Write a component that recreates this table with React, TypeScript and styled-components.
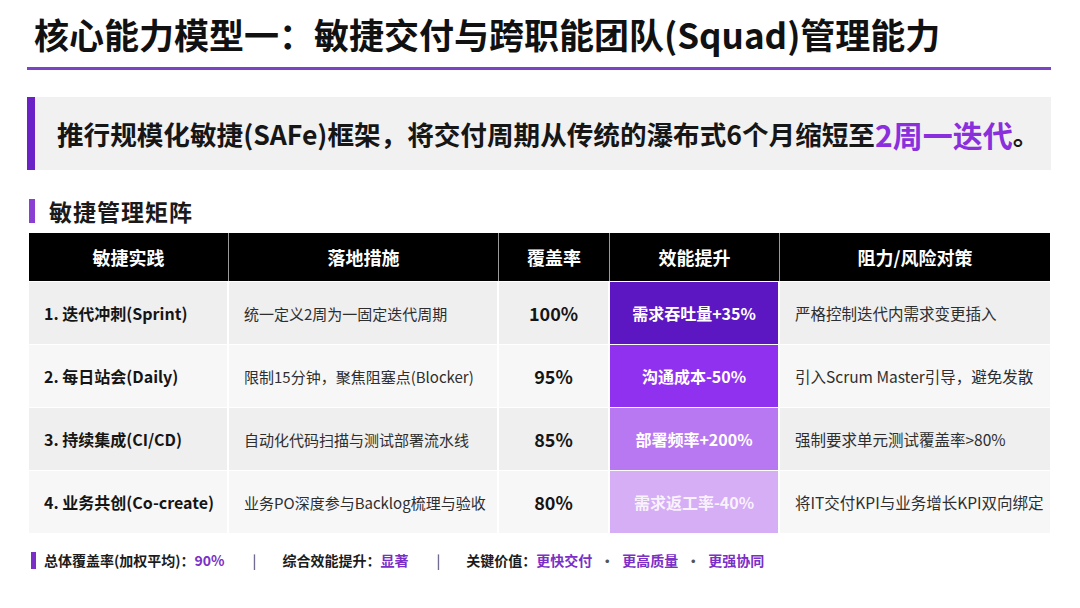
import styled, { createGlobalStyle } from "styled-components";

const GlobalStyle = createGlobalStyle`
  html, body {
    margin: 0;
    padding: 0;
    background: #ffffff;
  }
  body {
    font-family: "Noto Sans CJK SC", "Noto Sans", "Liberation Sans", sans-serif;
    color: #111111;
  }
`;

interface Practice {
  name: string;
  measure: string;
  coverage: string;
  gain: string;
  risk: string;
}

const practices: Practice[] = [
  { name: "1. 迭代冲刺(Sprint)", measure: "统一定义2周为一固定迭代周期", coverage: "100%", gain: "需求吞吐量+35%", risk: "严格控制迭代内需求变更插入" },
  { name: "2. 每日站会(Daily)", measure: "限制15分钟，聚焦阻塞点(Blocker)", coverage: "95%", gain: "沟通成本-50%", risk: "引入Scrum Master引导，避免发散" },
  { name: "3. 持续集成(CI/CD)", measure: "自动化代码扫描与测试部署流水线", coverage: "85%", gain: "部署频率+200%", risk: "强制要求单元测试覆盖率>80%" },
  { name: "4. 业务共创(Co-create)", measure: "业务PO深度参与Backlog梳理与验收", coverage: "80%", gain: "需求返工率-40%", risk: "将IT交付KPI与业务增长KPI双向绑定" },
];

const gainColors = ["#5c16c2", "#9131f0", "#b878f1", "#d6aef5"];
const columns = "200px 270px 111px 170px 270px";

const Page = styled.div`
  width: 1080px;
  height: 608px;
  box-sizing: border-box;
  padding: 12px 29px 0 27px;
  display: flex;
  flex-direction: column;
  overflow: hidden;
`;

const Title = styled.h1`
  margin: 0;
  padding: 0 0 12px 7px;
  font-size: 35px;
  line-height: 43px;
  font-weight: 700;
  color: #111111;
  border-bottom: 3px solid #7a44c8;
`;

const Callout = styled.div`
  margin-top: 27px;
  height: 73px;
  display: flex;
  align-items: center;
  background: #f1f1f1;
  border-left: 8px solid #6a22c6;
  padding-left: 22px;
  font-size: 26.6px;
  font-weight: 700;
  color: #161616;
  white-space: nowrap;
`;

const Highlight = styled.span`
  font-size: 30px;
  color: #8a2fdc;
`;

const SectionHead = styled.h2`
  margin: 27px 0 0 2px;
  display: flex;
  align-items: center;
  gap: 14px;
  font-size: 23px;
  line-height: 28px;
  font-weight: 700;
  letter-spacing: 1px;
  color: #1a1a1a;

  &::before {
    content: "";
    width: 6px;
    height: 24px;
    background: #8a3fd2;
  }
`;

const Table = styled.div`
  margin: 8px 0 0 2px;
  width: 1021px;
  display: grid;
  grid-template-columns: ${columns};
`;

const HeadCell = styled.div<{ $last?: boolean }>`
  height: 48px;
  background: #000000;
  color: #ffffff;
  font-size: 18px;
  font-weight: 700;
  display: flex;
  align-items: center;
  justify-content: center;
  border-right: ${({ $last }) => ($last ? "none" : "1px solid #9a9a9a")};
`;

const Cell = styled.div<{ $odd: boolean; $center?: boolean; $last?: boolean }>`
  height: 63px;
  box-sizing: border-box;
  display: flex;
  align-items: center;
  justify-content: ${({ $center }) => ($center ? "center" : "flex-start")};
  padding: 0 ${({ $center }) => ($center ? "0" : "15px")};
  background: ${({ $odd }) => ($odd ? "#efefef" : "#f7f7f7")};
  border-right: ${({ $last }) => ($last ? "none" : "2px solid #ffffff")};
  border-top: 1px solid #ffffff;
  white-space: nowrap;
`;

const NameText = styled.span`
  font-size: 16px;
  font-weight: 700;
  color: #151515;
`;

const BodyText = styled.span<{ $size: number }>`
  font-size: ${({ $size }) => $size}px;
  font-weight: 400;
  color: #2e2e2e;
`;

const Coverage = styled.span`
  font-size: 18px;
  font-weight: 700;
  color: #151515;
`;

const GainCell = styled.div<{ $bg: string; $faded: boolean }>`
  height: 63px;
  box-sizing: border-box;
  display: flex;
  align-items: center;
  justify-content: center;
  background: ${({ $bg }) => $bg};
  border-right: 2px solid #ffffff;
  border-top: 1px solid #ffffff;
  font-size: 16px;
  font-weight: 700;
  color: ${({ $faded }) => ($faded ? "rgba(255,255,255,0.85)" : "#ffffff")};
  white-space: nowrap;
`;

const Footer = styled.div`
  margin: 17px 0 0 4px;
  display: flex;
  align-items: center;
  font-size: 14px;
  font-weight: 700;
  color: #1c1c1c;
  white-space: nowrap;

  &::before {
    content: "";
    width: 5px;
    height: 17px;
    margin-right: 8px;
    background: #7b2fc6;
  }
`;

const Accent = styled.span`
  color: #7b2fc6;
`;

const Divider = styled.span`
  margin: 0 26px 0 28px;
  font-weight: 400;
  color: #333333;
`;

const Dot = styled.span`
  margin: 0 8px;
  color: #555555;
`;

export default function App() {
  return (
    <>
      <GlobalStyle />
      <Page>
        <Title>核心能力模型一：敏捷交付与跨职能团队(Squad)管理能力</Title>
        <Callout>
          推行规模化敏捷(SAFe)框架，将交付周期从传统的瀑布式6个月缩短至
          <Highlight>2周一迭代</Highlight>。
        </Callout>
        <SectionHead>敏捷管理矩阵</SectionHead>
        <Table>
          <HeadCell>敏捷实践</HeadCell>
          <HeadCell>落地措施</HeadCell>
          <HeadCell>覆盖率</HeadCell>
          <HeadCell>效能提升</HeadCell>
          <HeadCell $last>阻力/风险对策</HeadCell>
          {practices.map((p, i) => {
            const odd = i % 2 === 0;
            return [
              <Cell key={`n${i}`} $odd={odd}>
                <NameText>{p.name}</NameText>
              </Cell>,
              <Cell key={`m${i}`} $odd={odd}>
                <BodyText $size={15}>{p.measure}</BodyText>
              </Cell>,
              <Cell key={`c${i}`} $odd={odd} $center>
                <Coverage>{p.coverage}</Coverage>
              </Cell>,
              <GainCell key={`g${i}`} $bg={gainColors[i]} $faded={i === 3}>
                {p.gain}
              </GainCell>,
              <Cell key={`r${i}`} $odd={odd} $last>
                <BodyText $size={15.5}>{p.risk}</BodyText>
              </Cell>,
            ];
          })}
        </Table>
        <Footer>
          总体覆盖率(加权平均)：<Accent>90%</Accent>
          <Divider>|</Divider>
          综合效能提升：<Accent>显著</Accent>
          <Divider>|</Divider>
          关键价值：<Accent>更快交付</Accent>
          <Dot>·</Dot>
          <Accent>更高质量</Accent>
          <Dot>·</Dot>
          <Accent>更强协同</Accent>
        </Footer>
      </Page>
    </>
  );
}
